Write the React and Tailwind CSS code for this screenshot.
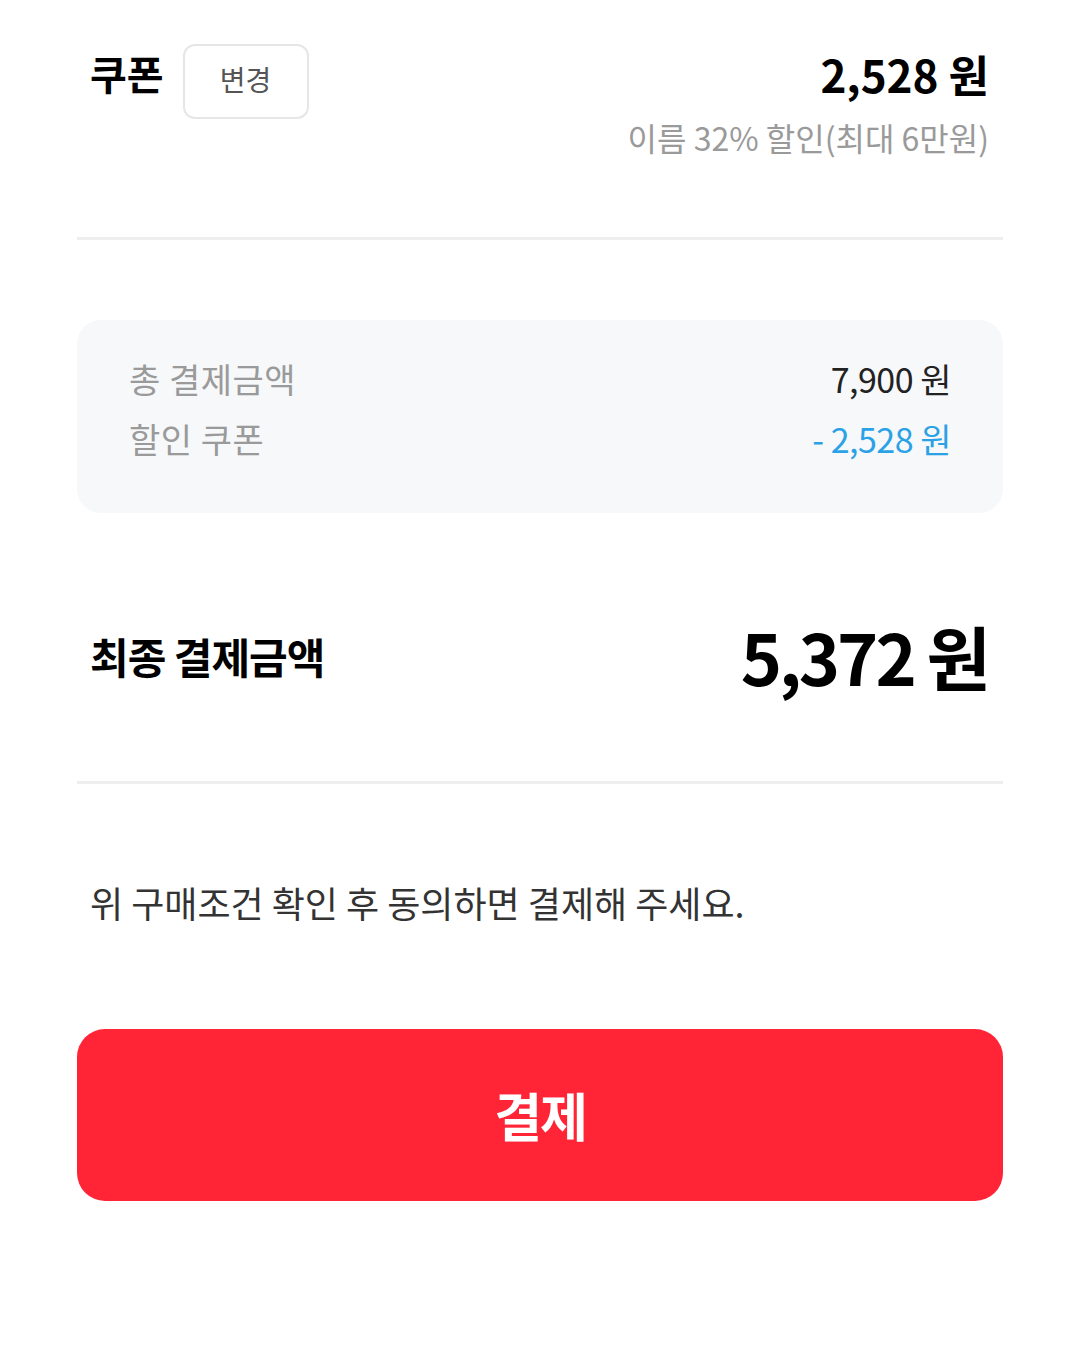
export default function App() {
  return (
    <div
      className="w-[1080px] h-[1350px] bg-white px-[77px]"
      style={{ fontFamily: '"Noto Sans CJK KR", "Noto Sans", sans-serif' }}
    >
      {/* coupon */}
      <div className="flex justify-between pt-[44px] h-[237px]">
        <div className="flex items-start pl-[13px]">
          <span className="text-[40px] font-bold text-black leading-none mt-[9px]">쿠폰</span>
          <button className="ml-[19px] w-[126px] h-[75px] pb-[6px] rounded-[12px] border-2 border-[#e6e6e6] bg-white text-[28px] text-[#555] leading-none">
            변경
          </button>
        </div>
        <div className="flex flex-col items-end pr-[14px]">
          <span className="text-[44px] font-bold text-black leading-none mt-[8px]">2,528 원</span>
          <span className="text-[32px] text-[#9a9a9a] leading-none mt-[25px]">이름 32% 할인(최대 6만원)</span>
        </div>
      </div>
      <div className="h-[3px] bg-[#eeeeee]" />

      {/* summary box */}
      <div className="mt-[80px] h-[193px] rounded-[24px] bg-[#f7f8fa] px-[52px] pt-[36px] text-[34px] leading-none">
        <div className="flex justify-between items-center h-[46px]">
          <span className="text-[#9a9a9a] tracking-[0.5px]">총 결제금액</span>
          <span className="text-[#222] tracking-[-0.5px]">7,900 원</span>
        </div>
        <div className="flex justify-between items-center h-[46px] mt-[14px]">
          <span className="text-[#9a9a9a] tracking-[0.5px]">할인 쿠폰</span>
          <span className="text-[#2ba2e6] tracking-[-0.5px]">- 2,528 원</span>
        </div>
      </div>

      {/* final */}
      <div className="flex justify-between items-center h-[268px] pt-[18px] pl-[13px] pr-[15px]">
        <span className="text-[42px] font-bold text-black leading-none tracking-[-1px]">최종 결제금액</span>
        <span className="text-[70px] font-bold text-black leading-none tracking-[-3px]">5,372 원</span>
      </div>
      <div className="h-[3px] bg-[#eeeeee]" />

      <p className="pl-[13px] mt-[100px] text-[36px] text-[#333] leading-none">
        위 구매조건 확인 후 동의하면 결제해 주세요.
      </p>

      <button className="mt-[109px] w-full h-[172px] rounded-[28px] bg-[#ff2436] text-white text-[52px] font-bold leading-none tracking-[-2px]">
        결제
      </button>
    </div>
  );
}
